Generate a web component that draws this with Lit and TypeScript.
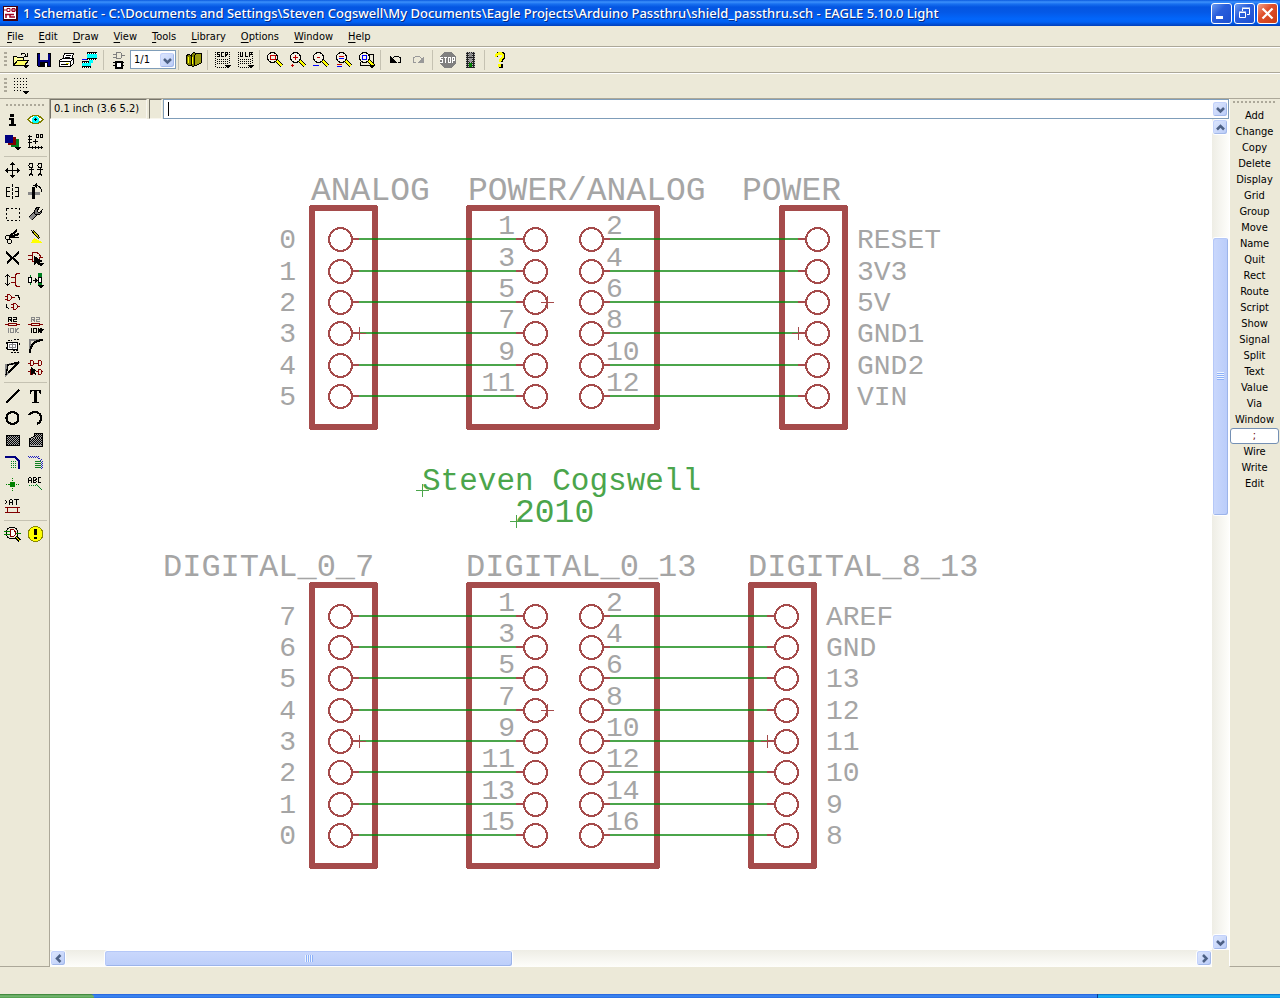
import { LitElement, html, svg, css, SVGTemplateResult } from "lit";
import { customElement, property } from "lit/decorators.js";

type Glyph = SVGTemplateResult;
interface Tool {
  name: string;
  icon: Glyph;
}

const more = svg`<path d="M11 14h6v1h-1v1h-1v1h-2v-1h-1v-1h-1z"/>`;
const lens = svg`
  <path d="M11 10l5 5" stroke="#000" stroke-width="4"/><path d="M11 10l5 5" stroke="#ff0" stroke-width="2"/>
  <circle cx="6.500" cy="6.500" r="5" fill="#f4f1e4" stroke="#000"/>`;
const resistor = (top: string, bottom: string) => svg`
  <path d="M1 9.500h15" stroke="#800000"/><rect x="4.500" y="8.500" width="8" height="2" fill="#ece9d8" stroke="#800000"/>
  <path d="M4.500 7V2.500h3v2H5M6.500 5l1.500 2M9 2.500h3v2H9.500v2H13" stroke="${top}" fill="none"/>
  <path d="M4.500 13v5M6.500 13.500h3v4h-3zM11.500 13v5m3-5l-3 3 3 2" stroke="${bottom}" fill="none"/>`;

const I: Record<string, Glyph> = {
  open: svg`<path d="M1.500 13.500v-8h3l1 1h6v3" fill="#ffff9c" stroke="#000"/><path d="M1.500 14.500l4-5h11l-4 5z" fill="#ffff63" stroke="#000"/><path d="M9 3.500c2-2 4-1 5 1M15 2v3h-3" fill="none" stroke="#000"/>${more}`,
  save: svg`<path d="M2 2h14v14H3l-1-1z"/><rect x="3" y="3" width="12" height="12" fill="#000080"/><rect x="5" y="2" width="8" height="7" fill="#ece9d8"/><rect x="5" y="11" width="8" height="5"/><rect x="10" y="12" width="2" height="4" fill="#fff"/>`,
  print: svg`<path d="M6.500 2.500h9l-2 6h-9z" fill="#fff" stroke="#000"/><path d="M7.500 4.500h5m-6 2h5" stroke="#000"/><path d="M1.500 9.500l3-2h11v5l-3 3h-11z" fill="#fff" stroke="#000"/><path d="M1.500 10.500h11v4m0-4l3-3M3 13.500h7" fill="none" stroke="#000"/><rect x="8" y="12" width="3" height="1" fill="#dd0"/>`,
  cam: svg`<path d="M6 1h10v8H6zM1 10h9v7H1z" fill="#0ff"/><path d="M6 2h10M6 8h10M1 11h9M1 16h9" stroke="#000" stroke-width="2"/><path d="M7 2h9M7 8h9M2 11h8M2 16h8" stroke="#fff" stroke-dasharray="1 1"/><path d="M8 9v3h4V9z" fill="#0ff"/><path d="M1 8.500h5" stroke="#00f"/>`,
  board: svg`<path d="M6.500 1.500h4q3 2 0 6h-4zM3 3.500h3m-3 3h3m6-2h3" fill="none" stroke="#808080"/><rect x="5.500" y="10.500" width="6" height="6" fill="#fff" stroke="#000" stroke-width="2"/><path d="M3 11.500h2m-2 3h2m7-3h2m-2 3h2" stroke="#000"/>`,
  books: svg`<path d="M1 5l3-2 2 2v9l-2 1-3-3z" fill="#808000" stroke="#000"/><path d="M6 4l3-3 2 2v10l-3 3-2-2z" fill="#808000" stroke="#000"/><path d="M9 5l3-3h4v10l-6 3z" fill="#9c9c10" stroke="#000"/><path d="M3.500 6v6m4-6v7" stroke="#ff0"/>`,
  scr: svg`<path d="M1.500 1v16M3 16.500h12M15.500 1v12" stroke="#000" stroke-dasharray="1 1"/><path d="M6 1.500H3.500v2h2v2H3M10 1.500H7.500v4H10M11.500 6V1.500h2v2h-2l2 2" fill="none" stroke="#000"/><path d="M3 8.500h11M3 10.500h11M3 12.500h11" stroke="#000" stroke-dasharray="1 1"/>${more}`,
  ulp: svg`<path d="M1.500 1v16M3 16.500h12M15.500 1v12" stroke="#000" stroke-dasharray="1 1"/><path d="M3.500 1v4.500h2V1M8.500 1v4.500h2.500M12.500 6V1.500h2v2h-2" fill="none" stroke="#000"/><path d="M3 8.500h11M3 10.500h11M3 12.500h11" stroke="#000" stroke-dasharray="1 1"/>${more}`,
  fit: svg`${lens}<rect x="4.500" y="4.500" width="5" height="4" fill="none" stroke="#c00000"/>`,
  zin: svg`${lens}<path d="M4 6.500h5M6.500 4v5M2 14.500h3M3.500 13v3" stroke="#c00000"/>`,
  zout: svg`${lens}<path d="M5 6.500h3" stroke="#c00000"/><path d="M1 14.500h6" stroke="#00f"/>`,
  redraw: svg`${lens}<path d="M4 5.500h5M2 13.500h5" stroke="#c00"/><path d="M4 7.500h5M2 15.500h5" stroke="#00f"/>`,
  zsel: svg`<path d="M9 3.500h6.500v11h-13V11" fill="none" stroke="#000"/>${lens}<rect x="4.500" y="4.500" width="4" height="4" fill="none" stroke="#00f"/>${more}`,
  undo: svg`<path d="M5 8c3-4 9-3 9 1 0 2-1 3-3 3" fill="none" stroke="#000"/><path d="M3 5v7h7z"/>`,
  redo: svg`<path d="M12 8c-3-4-9-3-9 1 0 2 1 3 3 3" fill="none" stroke="#999"/><path d="M14 5v7H7z" fill="#999"/>`,
  stop: svg`<path d="M5 1h7l5 5v6l-5 5H5l-4-5V6z" fill="#808080"/><path d="M4 6.500H1.500v2h2v3H1M5 6.500h3M6.500 6.500V12M9.500 6.500h2v5h-2zM13.500 12V6.500h2v3h-2" fill="none" stroke="#fff"/>`,
  traffic: svg`<rect x="4" y="1" width="9" height="16" fill="#222"/><path d="M4.500 1v16M6.500 1v16M8.500 1v16M10.500 1v16M12.500 1v16" stroke="#bbb" stroke-dasharray="1 1"/><circle cx="8.500" cy="4" r="2" fill="#888"/><circle cx="8.500" cy="9" r="2" fill="#999"/><circle cx="8.500" cy="14" r="2" fill="#008000"/>`,
  help: svg`<path d="M5 6c0-5 8-5 8-1 0 3-3 3-3 6" fill="none" stroke="#000" stroke-width="3"/><rect x="8" y="13" width="4" height="4"/><path d="M5 5.500c0-4 7-4 7-1 0 3-3 3-3 6.500" fill="none" stroke="#ff0" stroke-width="2.400"/><rect x="7" y="13" width="3" height="3" fill="#ff0"/>`,
  grid: svg`<path d="M2 1.500h14M2 4.500h14M2 7.500h14M2 10.500h14M2 13.500h9" stroke="#000" stroke-dasharray="1 2"/>${more}`,

  info: svg`<path d="M6 3h4v3H6zM5 7h5v6h2v2H5v-2h2V9H5z"/>`,
  show: svg`<path d="M1 8.500Q8 0 16 8.500 8 17 1 8.500z" fill="#fff" stroke="#808000" stroke-width="1.500"/><circle cx="8.500" cy="8.500" r="3.500" fill="#0ff"/><path d="M7 8.500h3M8.500 7v3" stroke="#000"/>`,
  layers: svg`<rect x="7" y="6" width="8" height="8" fill="#008020"/><rect x="4" y="4" width="8" height="8" fill="#800000"/><rect x="1" y="2" width="8" height="8" fill="#000080"/>${more}`,
  mark: svg`<path d="M2.500 2v13M1 14.500h15" stroke="#000"/><path d="M1 3.500h4M1 6.500h4M1 9.500h4M5.500 13v3M8.500 13v3M11.500 13v3M14.500 13v3M6 8.500h5M8.500 6v5M9.500 1.500h2v3h-2zM13.500 1.500h2v3h-2z" fill="none" stroke="#000"/>`,
  move: svg`<path d="M1 9.500h15M8.500 2v14" stroke="#000"/><path d="M8.500 1l3 3h-6zM8.500 17l3-3h-6zM1 9.500l3-3v6zM16 9.500l-3-3v6z"/>`,
  copy: svg`<g fill="none" stroke="#000"><circle cx="4" cy="4.500" r="2"/><circle cx="13" cy="4.500" r="2"/><path d="M1.500 8.500h5m3 0h6M4 6v6l-2.500 3.500M4 12l2.500 3.500M13 6v6l-2.500 3.500M13 12l2.500 3.500"/></g>`,
  mirror: svg`<path d="M8.500 1v16" stroke="#000" stroke-dasharray="3 1"/><path d="M6 4.500H2.500v9H6M2 8.500h4M11 4.500h3.500v9H11M15 8.500h-4" fill="none" stroke="#000"/>`,
  rotate: svg`<rect x="1" y="9" width="12" height="3" fill="#888"/><rect x="5" y="4" width="3" height="12"/><path d="M8 2.500c4 0 6 2 7 6" fill="none" stroke="#000"/><path d="M6 2.500L10 0v5z"/>`,
  group: svg`<rect x="2.500" y="3.500" width="13" height="12" fill="none" stroke="#000" stroke-dasharray="2 2"/>`,
  change: svg`<path d="M3 14l6-6" stroke="#000" stroke-width="5"/><path d="M3 14l6-6" stroke="#888" stroke-width="3"/><path d="M13 2c-5 0-6 3-5 7 3 2 6 1 7-4l-3 3-2-2z" fill="#777" stroke="#000"/>`,
  cut: svg`<path d="M5 10l8-7M6 10l9-3" stroke="#000" stroke-width="2"/><path d="M7 10.500h8" stroke="#000"/><circle cx="3.500" cy="10.500" r="2" fill="none" stroke="#000"/><circle cx="5.500" cy="14.500" r="2" fill="none" stroke="#000"/>`,
  paste: svg`<path d="M4 3l8 9M6 3l7 8" stroke="#000" stroke-width="1.200"/><path d="M7 11l6 3 2 2H4z" fill="#ff0"/><path d="M6 4l6 7" stroke="#cc0"/>`,
  del: svg`<path d="M2 3l13 12M15 3L3 14" stroke="#000" stroke-width="2"/>`,
  add: svg`<path d="M5.500 3.500h4c6 2 4 8 0 9h-4zM1 6.500h4M1 10.500h4M12 8.500h4" fill="none" stroke="#800000"/><path d="M7 7v9l3-2 2 3 1-4 3-1z"/>${more}`,
  pinswap: svg`<path d="M3.500 4v10M1 6l2.500-2.500L6 6M1 12l2.500 2.500L6 12" fill="none" stroke="#000"/><path d="M16 2.500h-3l-2 2v9l2 2h3M7 6.500h4M7 11.500h4" fill="none" stroke="#800000"/>`,
  replace: svg`<circle cx="13" cy="4" r="2.500" fill="#008020"/><circle cx="13" cy="13" r="2.500" fill="#008020"/><rect x="1.500" y="6.500" width="3" height="5" fill="#fff" stroke="#000"/><path d="M3.500 4v2m0 6v2" stroke="#008020"/><rect x="11.500" y="6.500" width="3" height="5" fill="#fff" stroke="#000"/><path d="M6 9.500h4M8 7.500l2 2-2 2" fill="none" stroke="#000"/>${more}`,
  gateswap: svg`<path d="M3.500 1.500v6h2q4-3 0-6zM1 3.500h2m-2 3h2M8 4.500h3M9.500 10.500v6h2q4-3 0-6zM7 11.500h2m-2 3h2M14 13.500h2" fill="none" stroke="#800000"/><path d="M11 2.500h3l2 4M2.500 11v3l3 2.500" fill="none" stroke="#000"/>`,
  name: svg`${resistor("#000", "#888")}`,
  value: svg`${resistor("#888", "#000")}${more}`,
  smash: svg`<rect x="3.500" y="5.500" width="10" height="7" fill="#fff" stroke="#000"/><path d="M5.500 7.500h6v3h-6zM8.500 6v6" fill="none" stroke="#888"/><path d="M4 3.500h4m2-1h6M2.500 5v2m0 3v2m13-6v3m-9 6h8m-6-2h6" stroke="#000" stroke-dasharray="2 1"/>`,
  miter: svg`<path d="M3 15V3h12" fill="none" stroke="#888" stroke-width="2"/><path d="M3 16Q3 4 16 3" fill="none" stroke="#000" stroke-width="2"/>`,
  split: svg`<path d="M2 16V6L14 4z" fill="none" stroke="#888" stroke-width="2"/><path d="M2 16L4 6l11-3M4 14L14 4" fill="none" stroke="#000" stroke-width="1.500"/>`,
  invoke: svg`<path d="M3.500 1.500v5h2q3-2.500 0-5zM1 4.500h2m4 0h2M11.500 1.500v5h2q3-2.500 0-5zM9 4.500h2M3.500 10.500v5h2q3-2.500 0-5zM1 12.500h2M11.500 10.500v5h2q3-2.500 0-5zM9 12.500h2m3 0h2" fill="none" stroke="#800000"/><path d="M4 8v8l2-2 2 2 1-1-1-3h2z"/>`,
  wire: svg`<path d="M2 16L15 3" stroke="#000" stroke-width="2"/>`,
  text: svg`<path d="M3 3h11v4h-1l-1-3h-2v11h2v1H5v-1h2V4H5L4 7H3z"/>`,
  circle: svg`<circle cx="8.500" cy="9" r="6" fill="none" stroke="#000" stroke-width="2.200"/>`,
  arc: svg`<path d="M2 6C7 0 15 4 14 10c0 2-2 4-4 5" fill="none" stroke="#000" stroke-width="2.200"/>`,
  rect: svg`<rect x="2.500" y="4.500" width="13" height="10" fill="#aaa" stroke="#000"/><path d="M3 5.500h12M3 7.500h12M3 9.500h12M3 11.500h12M3 13.500h12" stroke="#000" stroke-dasharray="1 1"/><path d="M4 6.500h11M4 8.500h11M4 10.500h11M4 12.500h11" stroke="#000" stroke-dasharray="1 1"/>`,
  polygon: svg`<path d="M2.500 15.500v-8l5-2v-3h8v13z" fill="#aaa" stroke="#000"/><path d="M8 4.500h7M8 6.500h7M3 8.500h12M3 10.500h12M3 12.500h12" stroke="#000" stroke-dasharray="1 1"/><path d="M9 3.500h6M9 5.500h6M6 7.500h9M4 9.500h11M4 11.500h11M4 13.500h11" stroke="#000" stroke-dasharray="1 1"/>`,
  bus: svg`<path d="M1 4h10l4 4v8" fill="none" stroke="#000080" stroke-width="2.500"/><path d="M7 8.500h6M7 10.500h6M7 12.500h6M7 14.500h6" stroke="#008020" stroke-dasharray="1 1"/>`,
  net: svg`<path d="M1 3.500h10l4 4v8" fill="none" stroke="#2020c0" stroke-dasharray="1 1"/><path d="M2 4.500h9l3 4v7" fill="none" stroke="#2020c0" stroke-dasharray="1 1"/><path d="M8 8.500h6M8 10.500h6M8 12.500h6M8 14.500h6" stroke="#108020"/>`,
  junction: svg`<circle cx="8.500" cy="9.500" r="3" fill="#008000"/><path d="M2 9.500h13M8.500 3v13" stroke="#008000" stroke-dasharray="1 1"/>`,
  label: svg`<path d="M1.500 8V3.500l1-1h1l1 1V8M1.500 5.500h3M6.500 7.500v-5h2l1 1-1 2 1 1-1 1zM6.500 5.500h2M14 2.500h-2.500v5H14" fill="none" stroke="#000"/><path d="M2 10.500h9" stroke="#008020" stroke-dasharray="1 1"/><path d="M9 9l6 6" stroke="#008020"/>`,
  attribute: svg`<path d="M1 3l2 2-2 2M5.500 8V3.500l1-1h1l1 1V8M5.500 5.500h3M10 2.500h5M12.500 2.500V8" fill="none" stroke="#000"/><rect x="3.500" y="10.500" width="10" height="5" fill="none" stroke="#800000"/><path d="M1 10.500h2M1 15.500h2M14 10.500h2M14 15.500h2" stroke="#800000"/>`,
  erc: svg`<circle cx="8" cy="8" r="6" fill="none" stroke="#000"/><path d="M6.500 4.500h3q4 4 0 7h-3z" fill="#fff" stroke="#800000"/><path d="M0 6.500h6M0 9.500h6M12 8.500h5" stroke="#008000"/><path d="M12 12l4 4" stroke="#000" stroke-width="3"/><path d="M12 12l4 4" stroke="#ff0"/>`,
  errors: svg`<circle cx="8.500" cy="9" r="7.500" fill="#ff0" stroke="#888800"/><path d="M8.500 4v6" stroke="#000" stroke-width="2.400"/><circle cx="8.500" cy="13" r="1.400"/>`,
};

const t = (name: string, key: string): Tool => ({ name, icon: I[key] });

const shared = css`
  :host {
    font: 11px/16px "DejaVu Sans Condensed", "DejaVu Sans", sans-serif;
    color: #000;
  }
  button {
    font: inherit;
    color: inherit;
    border: 0;
    padding: 0;
    margin: 0;
    background: none;
  }
  .handle-v {
    width: 3px;
    height: 16px;
    background: linear-gradient(#aca899 2px, transparent 2px) 0 0 / 3px 4px;
  }
  .handle-h {
    height: 2px;
    background: linear-gradient(90deg, #aca899 2px, transparent 2px) 0 0 / 4px 2px;
  }
`;

@customElement("tool-button")
class ToolButton extends LitElement {
  @property({ attribute: false }) tool!: Tool;
  static styles = [
    shared,
    css`
      :host {
        display: block;
        width: 23px;
        height: 22px;
      }
      button {
        display: grid;
        place-items: center;
        width: 100%;
        height: 100%;
      }
      svg {
        display: block;
        shape-rendering: crispEdges;
      }
    `,
  ];
  render() {
    return html`<button aria-label=${this.tool.name}>
      <svg width="17" height="18" viewBox="0 0 17 18">${this.tool.icon}</svg>
    </button>`;
  }
}

const chevrons: Record<string, string> = {
  up: "M4 9.500l3.500-3.500 3.500 3.500",
  down: "M4 6l3.500 3.500 3.500-3.500",
  left: "M9.500 4l-3.500 3.500 3.500 3.500",
  right: "M6 4l3.500 3.500-3.500 3.500",
};

const xpButton = css`
  .xp {
    display: grid;
    place-items: center;
    flex: none;
    width: 16px;
    height: 16px;
    border: 1px solid #fff;
    border-radius: 3px;
    box-sizing: border-box;
    background: linear-gradient(135deg, #dfe8fe, #b9cbf7);
    box-shadow: inset -1px -1px 0 #a3b9ea, inset 1px 1px 0 #c3d2fb;
  }
  .xp svg {
    width: 15px;
    height: 15px;
    fill: none;
    stroke: #4d6185;
    stroke-width: 2.5;
  }
`;
const chevron = (dir: string) => html`<svg viewBox="0 0 15 15"><path d=${chevrons[dir]} /></svg>`;

@customElement("scroll-bar")
class ScrollBar extends LitElement {
  @property({ type: Boolean, reflect: true }) vertical = false;
  @property({ attribute: false }) parts = [1, 1, 1];
  static styles = [
    shared,
    xpButton,
    css`
      :host {
        display: flex;
        height: 17px;
        box-sizing: border-box;
        background: linear-gradient(#eeede5, #fefefb);
      }
      :host([vertical]) {
        flex-direction: column;
        width: 17px;
        height: auto;
        background: linear-gradient(90deg, #eeede5, #fefefb);
      }
      .thumb {
        display: grid;
        place-items: center;
        box-sizing: border-box;
        border: 1px solid #fff;
        border-radius: 3px;
        background: linear-gradient(#cad8fc, #bccefa);
        box-shadow: inset -1px -1px 0 #9cb4ea, inset 1px 1px 0 #b5c8f8;
      }
      :host([vertical]) .thumb {
        background: linear-gradient(90deg, #cad8fc, #b9ccfa);
      }
      .grip {
        width: 8px;
        height: 7px;
        background: repeating-linear-gradient(90deg, #eef4fe 0 1px, #8cb0f8 1px 2px);
      }
      :host([vertical]) .grip {
        width: 7px;
        height: 8px;
        background: repeating-linear-gradient(#eef4fe 0 1px, #8cb0f8 1px 2px);
      }
    `,
  ];
  render() {
    const [before, thumb, after] = this.parts;
    return html`
      <button class="xp" aria-label="Scroll back">${chevron(this.vertical ? "up" : "left")}</button>
      <div style="flex:${before} 0 0"></div>
      <div class="thumb" style="flex:${thumb} 0 0"><div class="grip"></div></div>
      <div style="flex:${after} 0 0"></div>
      <button class="xp" aria-label="Scroll forward">${chevron(this.vertical ? "down" : "right")}</button>
    `;
  }
}

interface Block {
  rows: number[];
  bottom: number;
  top: number;
  left: string[];
  right: string[];
  rightBox: number;
}

const blocks: Block[] = [
  {
    rows: [239, 271, 302, 333, 365, 396],
    top: 208,
    bottom: 427,
    left: ["0", "1", "2", "3", "4", "5"],
    right: ["RESET", "3V3", "5V", "GND1", "GND2", "VIN"],
    rightBox: 782,
  },
  {
    rows: [616, 647, 678, 710, 741, 772, 804, 835],
    top: 585,
    bottom: 866,
    left: ["7", "6", "5", "4", "3", "2", "1", "0"],
    right: ["AREF", "GND", "13", "12", "11", "10", "9", "8"],
    rightBox: 751,
  },
];

@customElement("schematic-view")
class SchematicView extends LitElement {
  static styles = css`
    :host {
      display: block;
      min-width: 0;
      min-height: 0;
      overflow: hidden;
      background: #fff;
    }
    svg {
      display: block;
      width: 100%;
      height: 100%;
      shape-rendering: crispEdges;
      font-family: "Liberation Mono", monospace;
    }
    .box {
      fill: none;
      stroke: #a54b4b;
      stroke-width: 6;
      stroke-linejoin: round;
    }
    .pin {
      fill: none;
      stroke: #a54b4b;
      stroke-width: 2;
    }
    .net {
      stroke: #4ba54b;
      stroke-width: 2;
    }
    .over {
      stroke: #257c18;
      stroke-width: 2;
    }
    .origin {
      fill: none;
      stroke: #a54b4b;
    }
    .note-origin {
      fill: none;
      stroke: #4ba54b;
    }
    .label {
      fill: #a5a5a5;
      font-size: 28px;
    }
    .end {
      text-anchor: end;
    }
    .title {
      fill: #a5a5a5;
      font-size: 33px;
    }
    .note {
      fill: #4ba54b;
      font-size: 33px;
    }
    .author {
      font-size: 31px;
    }
    .narrow {
      font-size: 32px;
    }
  `;
  private cross(x: number, y: number, cls = "origin") {
    return svg`<path class=${cls} d="M${x - 6} ${y + 0.5}h13M${x + 0.5} ${y - 6}v13"/>`;
  }
  private block(b: Block) {
    const rx = b.rightBox;
    const h = b.bottom - b.top;
    return svg`
      <rect class="box" x="312" y=${b.top} width="63" height=${h} />
      <rect class="box" x="469" y=${b.top} width="188" height=${h} />
      <rect class="box" x=${rx} y=${b.top} width="63" height=${h} />
      ${b.rows.map(
        (y, i) => svg`
        <path class="net" d="M359 ${y}H517M610 ${y}H${rx + 17}"/>
        <path class="over" d="M372 ${y}h6M466 ${y}h6M654 ${y}h6M${rx - 3} ${y}h6"/>
        <path class="pin" d="M352 ${y}h7M516 ${y}h7M603 ${y}h7M${rx + 16} ${y}h7"/>
        <circle class="pin" cx="340.500" cy=${y + 0.5} r="11.500"/>
        <circle class="pin" cx="535.500" cy=${y + 0.5} r="11.500"/>
        <circle class="pin" cx="591.500" cy=${y + 0.5} r="11.500"/>
        <circle class="pin" cx=${rx + 35.5} cy=${y + 0.5} r="11.500"/>
        <text class="label end" x="296" y=${y + 9}>${b.left[i]}</text>
        <text class="label end" x="515" y=${y - 5}>${i * 2 + 1}</text>
        <text class="label" x="606" y=${y - 5}>${i * 2 + 2}</text>
        <text class="label" x=${rx + 75} y=${y + 9}>${b.right[i]}</text>`
      )}`;
  }
  render() {
    return html`<svg>
      <g transform="translate(-50 -119)">
        ${blocks.map((b) => this.block(b))}
        ${this.cross(359, 333)} ${this.cross(547, 302)} ${this.cross(798, 333)}
        ${this.cross(359, 741)} ${this.cross(547, 710)} ${this.cross(767, 741)}
        ${this.cross(422, 490, "note-origin")} ${this.cross(516, 521, "note-origin")}
        <text class="title" x="311" y="200">ANALOG</text>
        <text class="title" x="468" y="200">POWER/ANALOG</text>
        <text class="title" x="742" y="200">POWER</text>
        <text class="note author" x="422" y="490">Steven Cogswell</text>
        <text class="note" x="515" y="522">2010</text>
        <text class="title narrow" x="163" y="576">DIGITAL_0_7</text>
        <text class="title narrow" x="466" y="576">DIGITAL_0_13</text>
        <text class="title narrow" x="748" y="576">DIGITAL_8_13</text>
      </g>
    </svg>`;
  }
}

const menus = ["File", "Edit", "Draw", "View", "Tools", "Library", "Options", "Window", "Help"];

const bar: Tool[][] = [
  [t("Open", "open"), t("Save", "save"), t("Print", "print"), t("CAM", "cam")],
  [t("Board", "board")],
  [t("Use", "books")],
  [t("Script", "scr"), t("Run ULP", "ulp")],
  [t("Fit", "fit"), t("Zoom in", "zin"), t("Zoom out", "zout"), t("Redraw", "redraw"), t("Zoom select", "zsel")],
  [t("Undo", "undo"), t("Redo", "redo")],
  [t("Stop", "stop"), t("Go", "traffic")],
  [t("Help", "help")],
];

const palette: string[][] = [
  ["info", "show", "layers", "mark"],
  ["move", "copy", "mirror", "rotate", "group", "change", "cut", "paste", "del", "add", "pinswap", "replace",
    "gateswap", "", "name", "value", "smash", "miter", "split", "invoke"],
  ["wire", "text", "circle", "arc", "rect", "polygon", "bus", "net", "junction", "label", "attribute", ""],
  ["erc", "errors"],
];

const commands = ["Add", "Change", "Copy", "Delete", "Display", "Grid", "Group", "Move", "Name", "Quit", "Rect",
  "Route", "Script", "Show", "Signal", "Split", "Text", "Value", "Via", "Window", ";", "Wire", "Write", "Edit"];

@customElement("app-root")
class AppRoot extends LitElement {
  static styles = [
    shared,
    xpButton,
    css`
      :host {
        display: flex;
        flex-direction: column;
        height: 100vh;
        overflow: hidden;
        background: #ece9d8;
      }
      .titlebar {
        display: flex;
        align-items: center;
        gap: 2px;
        flex: none;
        height: 26px;
        padding: 0 2px 0 3px;
        box-sizing: border-box;
        background: linear-gradient(#0a5ade 0, #3c91fb 2px, #1870f0 4px, #0456e2 7px, #0458e6 12px, #0266fb 19px, #0162f5 22px, #0140ba 26px);
      }
      .title {
        flex: 1;
        min-width: 0;
        margin: 0 0 0 3px;
        overflow: hidden;
        white-space: nowrap;
        font: 500 13px/18px "Noto Sans", sans-serif;
        color: #fff;
        text-shadow: 1px 1px 0 #0a2a80;
      }
      .caption {
        width: 21px;
        height: 21px;
        box-sizing: border-box;
        border: 1px solid #fff;
        border-radius: 3px;
        background: linear-gradient(135deg, #6c9cf0, #2a5fdc 40%, #1c4fd0);
      }
      .close {
        background: linear-gradient(135deg, #f0a088, #e0502c 40%, #c83c14);
      }
      .caption svg {
        display: block;
      }
      .menubar {
        display: flex;
        flex: none;
        gap: 1px;
        height: 20px;
        box-sizing: border-box;
        padding-top: 1px;
        align-items: center;
      }
      .menubar button {
        padding: 0 7px;
      }
      .key {
        text-decoration: underline;
        text-underline-offset: 2px;
      }
      .toolbar {
        display: flex;
        flex: none;
        align-items: center;
        height: 26px;
        box-sizing: border-box;
        padding-left: 4px;
        border-top: 1px solid #aca899;
        box-shadow: inset 0 1px 0 #fff;
      }
      .toolbar .handle-v {
        margin-right: 2px;
      }
      .sep-v {
        width: 1px;
        height: 20px;
        margin: 0 3px 0 2px;
        background: #c5c2b2;
      }
      .sheet {
        display: grid;
        width: 46px;
        height: 19px;
        box-sizing: border-box;
        border: 1px solid #7f9db9;
        background: #fff;
      }
      .sheet > * {
        grid-area: 1 / 1;
      }
      .sheet select {
        appearance: none;
        border: 0;
        padding: 1px 0 0 3px;
        font: inherit;
        background: transparent;
      }
      .drop {
        justify-self: end;
        align-self: center;
        pointer-events: none;
      }
      .main {
        display: grid;
        flex: 1;
        min-height: 0;
        grid-template-columns: 50px minmax(0, 1fr) 51px;
        border-top: 1px solid #aca899;
      }
      .palette {
        padding: 5px 0 0 1px;
        border-right: 1px solid #aca899;
        border-bottom: 1px solid #aca899;
      }
      .palette .handle-h {
        margin: 0 4px 3px 5px;
      }
      .group {
        display: grid;
        grid-template-columns: 23px 23px;
        grid-auto-rows: 22px;
      }
      .group + .group {
        margin-top: 6px;
        position: relative;
      }
      .group + .group::before {
        content: "";
        position: absolute;
        top: -3px;
        left: 3px;
        right: 2px;
        height: 1px;
        background: #c5c2b2;
      }
      .work {
        display: grid;
        grid-template-rows: 20px minmax(0, 1fr) 17px;
        grid-template-columns: minmax(0, 1fr) 17px;
      }
      .entry {
        grid-column: 1 / 3;
        display: flex;
      }
      .coords,
      .state {
        box-sizing: border-box;
        margin-right: 2px;
        border: 1px solid #f8f6ee;
        border-top-color: #77756a;
        border-left-color: #77756a;
      }
      .coords {
        width: 97px;
        padding: 1px 0 0 3px;
      }
      .state {
        width: 13px;
        margin-right: 1px;
      }
      .command {
        display: flex;
        flex: 1;
        align-items: center;
        box-sizing: border-box;
        border: 1px solid #7f9db9;
        background: #fff;
      }
      .caret {
        width: 1px;
        height: 14px;
        margin-left: 4px;
        background: #000;
      }
      .command input {
        flex: 1;
        min-width: 0;
        border: 0;
        padding: 0;
        outline: 0;
        font: inherit;
        background: none;
      }
      .commands {
        padding: 2px 1px 0 0;
        border-left: 1px solid #fff;
        border-bottom: 1px solid #aca899;
      }
      .commands .handle-h {
        margin: 0 3px 5px;
      }
      .commands button {
        display: block;
        width: 100%;
        height: 16px;
        text-align: center;
      }
      .commands .boxed {
        border: 1px solid #7490b4;
        border-radius: 3px;
        background: #fff;
        line-height: 14px;
        color: #600;
      }
      .status {
        flex: none;
        height: 27px;
      }
      .taskbar {
        display: flex;
        flex: none;
        height: 4px;
        background: linear-gradient(#245edb, #3f8cf3 2px, #2a6be0);
      }
      .start {
        width: 94px;
        border-radius: 0 4px 0 0;
        background: linear-gradient(#2f7a2c, #7cbc78 2px, #4d9c48);
      }
      .tray {
        width: 182px;
        margin-left: auto;
        border-left: 1px solid #083c90;
        background: linear-gradient(#0c62c8, #19b9f3 2px, #1290e8);
      }
    `,
  ];

  private run(tools: Tool[]) {
    return tools.map((x) => html`<tool-button .tool=${x}></tool-button>`);
  }

  render() {
    return html`
      <header class="titlebar">
        <svg width="15" height="15" viewBox="0 0 15 15">
          <rect width="15" height="15" fill="#400010" /><rect x="1" y="1" width="12" height="12" fill="#fff" />
          <path d="M1 4h3M4 2.500h3v3H4zM8 4h5M9 2.500h3v3H9z" fill="none" stroke="#a00020" />
          <path d="M2 8.500h9M3 8v4M7 8v3h5" fill="none" stroke="#a00020" stroke-width="1.500" />
        </svg>
        <h1 class="title">1 Schematic - C:\\Documents and Settings\\Steven Cogswell\\My Documents\\Eagle Projects\\Arduino Passthru\\shield_passthru.sch - EAGLE 5.10.0 Light</h1>
        <button class="caption" aria-label="Minimize">
          <svg width="19" height="19"><rect x="4" y="12" width="7" height="3" fill="#fff" /></svg>
        </button>
        <button class="caption" aria-label="Restore">
          <svg width="19" height="19" fill="none" stroke="#fff">
            <path d="M7.500 7V4.500h7v6H12M7 4h8" /><path d="M4.500 8.500h6v5h-6zM4 8h7" />
          </svg>
        </button>
        <button class="caption close" aria-label="Close">
          <svg width="19" height="19" stroke="#fff" stroke-width="2.200"><path d="M4.500 4.500l10 10M14.500 4.500l-10 10" /></svg>
        </button>
      </header>
      <nav class="menubar">
        ${menus.map((m) => html`<button><span class="key">${m[0]}</span>${m.slice(1)}</button>`)}
      </nav>
      <div class="toolbar">
        <div class="handle-v"></div>
        ${bar.map(
          (g, i) => html`${i ? html`<div class="sep-v"></div>` : ""}${this.run(g)}${i === 1
            ? html`<label class="sheet">
                <select aria-label="Sheet"><option>1/1</option></select>
                <span class="xp drop">${chevron("down")}</span>
              </label>`
            : ""}`
        )}
      </div>
      <div class="toolbar">
        <div class="handle-v"></div>
        ${this.run([t("Grid", "grid")])}
      </div>
      <main class="main">
        <aside class="palette">
          <div class="handle-h"></div>
          ${palette.map(
            (g) => html`<div class="group">
              ${g.map((k) => (k ? html`<tool-button .tool=${t(k, k)}></tool-button>` : html`<span></span>`))}
            </div>`
          )}
        </aside>
        <section class="work">
          <div class="entry">
            <div class="coords">0.1 inch (3.6 5.2)</div>
            <div class="state"></div>
            <label class="command">
              <span class="caret"></span>
              <input type="text" aria-label="Command" />
              <button class="xp" aria-label="History">${chevron("down")}</button>
            </label>
          </div>
          <schematic-view></schematic-view>
          <scroll-bar vertical .parts=${[102, 277, 419]}></scroll-bar>
          <scroll-bar .parts=${[38, 407, 683]}></scroll-bar>
        </section>
        <aside class="commands">
          <div class="handle-h"></div>
          ${commands.map((c) => html`<button class=${c === ";" ? "boxed" : ""}>${c}</button>`)}
        </aside>
      </main>
      <footer class="status"></footer>
      <div class="taskbar">
        <div class="start"></div>
        <div class="tray"></div>
      </div>
    `;
  }
}
